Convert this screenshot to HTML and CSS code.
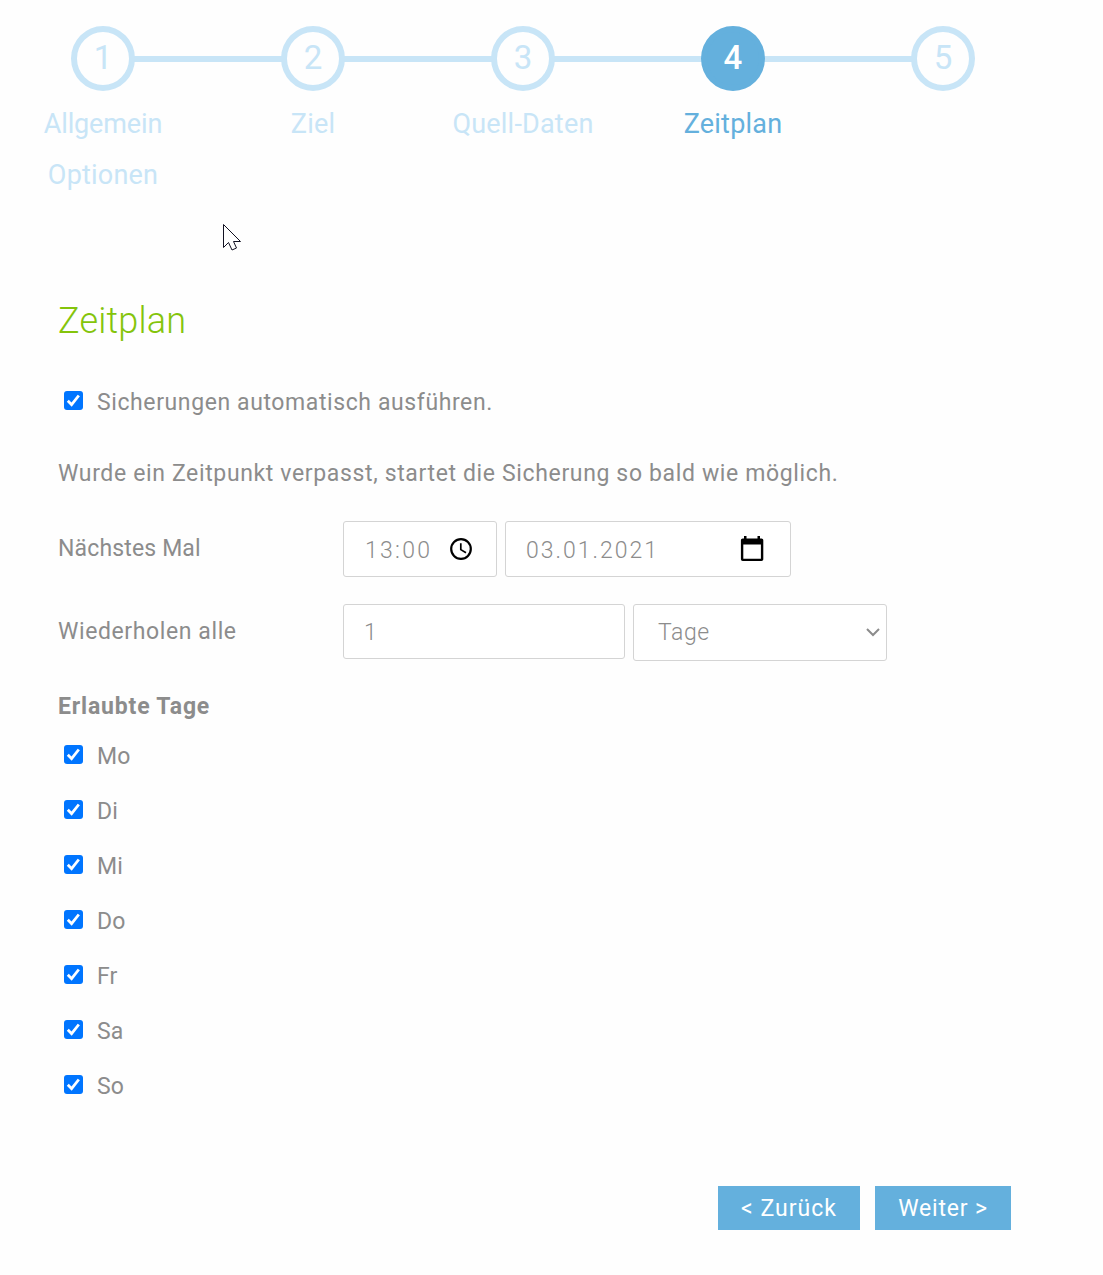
FILE: index.html
```html
<!DOCTYPE html>
<html lang="de">
<head>
<meta charset="utf-8">
<title>Zeitplan</title>
<link rel="stylesheet" href="styles.css">
</head>
<body>
<svg class="defs" width="0" height="0" aria-hidden="true">
  <symbol id="tick" viewBox="0 0 19 19"><rect width="19" height="19" rx="3"/><path d="M3.8 9.8 7.6 13.7 14.8 4.5"/></symbol>
</svg>
<nav class="steps">
  <ol class="circles">
    <li><span class="circle">1</span></li>
    <li><span class="circle">2</span></li>
    <li><span class="circle">3</span></li>
    <li><span class="circle active">4</span></li>
    <li><span class="circle">5</span></li>
  </ol>
  <div class="labels">
    <span class="tight">Allgemein</span>
    <span>Ziel</span>
    <span>Quell-Daten</span>
    <span class="current">Zeitplan</span>
    <span>Optionen</span>
  </div>
  <svg class="cursor" width="20" height="30" viewBox="0 0 20 30"><path d="M1.5 1.5V24.5L6.5 19.5 10 27 14.5 25 11.5 18.5H18.5Z"/></svg>
</nav>
<main class="form">
  <h2 class="title">Zeitplan</h2>
  <label class="check auto"><svg class="box"><use href="#tick"/></svg><span>Sicherungen automatisch ausführen.</span></label>
  <p class="hint">Wurde ein Zeitpunkt verpasst, startet die Sicherung so bald wie möglich.</p>
  <div class="row next">
    <span class="name">Nächstes Mal</span>
    <div class="field time"><span>13:00</span>
      <svg width="24" height="24" viewBox="0 0 24 24"><circle cx="12" cy="12" r="9.8"/><path d="M11.8 6.3V12.6L17 15.8" class="thin"/></svg>
    </div>
    <div class="field date"><span>03.01.2021</span>
      <svg width="24" height="26" viewBox="0 0 24 26"><path class="solid" fill-rule="evenodd" d="M4 0H6.5V2.5H17.5V0H20V2.5H21.5Q23.3 2.5 23.3 4.3V23.2Q23.3 25 21.5 25H2.7Q.9 25 .9 23.2V4.3Q.9 2.5 2.7 2.5H4ZM3.3 8.5V22.7H20.9V8.5Z"/></svg>
    </div>
  </div>
  <div class="row repeat">
    <span class="name">Wiederholen alle</span>
    <div class="field count"><span>1</span></div>
    <div class="field unit"><span>Tage</span>
      <svg width="14" height="9" viewBox="0 0 14 9"><path class="chevron" d="M1 1 7 7 13 1"/></svg>
    </div>
  </div>
  <h3 class="subtitle">Erlaubte Tage</h3>
  <div class="days">
    <label class="check"><svg class="box"><use href="#tick"/></svg><span>Mo</span></label>
    <label class="check"><svg class="box"><use href="#tick"/></svg><span>Di</span></label>
    <label class="check"><svg class="box"><use href="#tick"/></svg><span>Mi</span></label>
    <label class="check"><svg class="box"><use href="#tick"/></svg><span>Do</span></label>
    <label class="check"><svg class="box"><use href="#tick"/></svg><span>Fr</span></label>
    <label class="check"><svg class="box"><use href="#tick"/></svg><span>Sa</span></label>
    <label class="check"><svg class="box"><use href="#tick"/></svg><span>So</span></label>
  </div>
  <div class="actions"><button class="back">&lt; Zurück</button><button class="forward">Weiter &gt;</button></div>
</main>
</body>
</html>
```
FILE: styles.css
```css
* { box-sizing: border-box; }
body {
  margin: 0;
  min-height: 1275px;
  background: #fefefe;
  color: #8c8c8c;
  font: 23px/30px Roboto, "Noto Sans", sans-serif;
  letter-spacing: 0.6px;
}
.defs { display: block; }

.steps { position: relative; height: 296px; margin-left: -2px; padding-top: 26px; color: #c8e5f7; }
.circles { display: grid; grid-template-columns: repeat(5, 210px); margin: 0; padding: 0; list-style: none; background: linear-gradient(#c8e5f7, #c8e5f7) 105px 30px / 840px 6px no-repeat; }
.circles li { display: flex; justify-content: center; }
.circle { width: 64px; height: 65px; border: 6px solid #c8e5f7; border-radius: 50%; background: #fefefe; font-size: 33px; line-height: 52px; text-align: center; letter-spacing: 0; }
.circle.active { background: #64b0dd; border-color: #64b0dd; color: #fff; font-weight: 500; }
.labels { display: grid; grid-template-columns: repeat(4, 210px); margin-top: 8px; font-size: 27px; line-height: 51px; text-align: center; letter-spacing: 0.2px; }
.labels .tight { letter-spacing: -0.15px; }
.labels .current { color: #64b0dd; }
.cursor { position: absolute; left: 224px; top: 223px; fill: #fff; stroke: #111122; stroke-width: 1; }

.form { width: 1011px; padding-left: 58px; }
.title { margin: 0; color: #84c40b; font-size: 36px; font-weight: 300; line-height: 50px; letter-spacing: 0.2px; }
.check { display: flex; align-items: center; gap: 14px; height: 30px; padding-left: 6px; }
.check span { padding-top: 2px; }
.box { width: 19px; height: 19px; margin-top: -3px; fill: #0075ff; stroke: none; }
#tick path { fill: none; stroke: #fff; stroke-width: 2.8; }
.auto { margin-top: 41px; }
.hint { margin: 42px 0 0; letter-spacing: 0.64px; }

.row { display: flex; gap: 8px; }
.name { width: 277px; height: 54px; line-height: 56px; }
.next { margin-top: 32px; }
.next .name { letter-spacing: 0.15px; }
.repeat { margin-top: 27px; }
.field { display: flex; align-items: center; justify-content: space-between; height: 56px; padding: 2px 20px 0 21px; border: 1px solid #d4d4d4; border-radius: 3px; background: #fff; font-weight: 300; }
.field svg { flex: none; fill: none; stroke: #000; stroke-width: 2.2; margin-top: -2px; }
.field .thin { stroke-width: 1.7; }
.field .solid { fill: #000; stroke: none; }
.field .chevron { stroke: #8c8c8c; stroke-width: 2; }
.time { width: 154px; padding-right: 23px; letter-spacing: 2.3px; }
.date { width: 286px; padding-right: 26px; padding-left: 20px; letter-spacing: 2px; }
.time span, .date span { padding-top: 2px; }
.count { width: 282px; height: 55px; padding-left: 20px; }
.unit { width: 254px; height: 57px; padding: 0 6px 0 24px; }
.field.unit svg { margin-top: 0; }

.subtitle { margin: 31px 0 0; font-size: 23px; line-height: 30px; font-weight: 700; letter-spacing: 0.83px; }
.days { display: grid; gap: 25px; margin-top: 19px; letter-spacing: 0.2px; }
.actions { display: flex; justify-content: flex-end; gap: 15px; margin-top: 85px; }
.actions button { height: 44px; padding: 2px 0 0; border: 0; background: #64b0dd; color: #fff; font: inherit; letter-spacing: 1px; }
.actions .back { width: 142px; }
.actions .forward { width: 136px; letter-spacing: 0.8px; }
```
